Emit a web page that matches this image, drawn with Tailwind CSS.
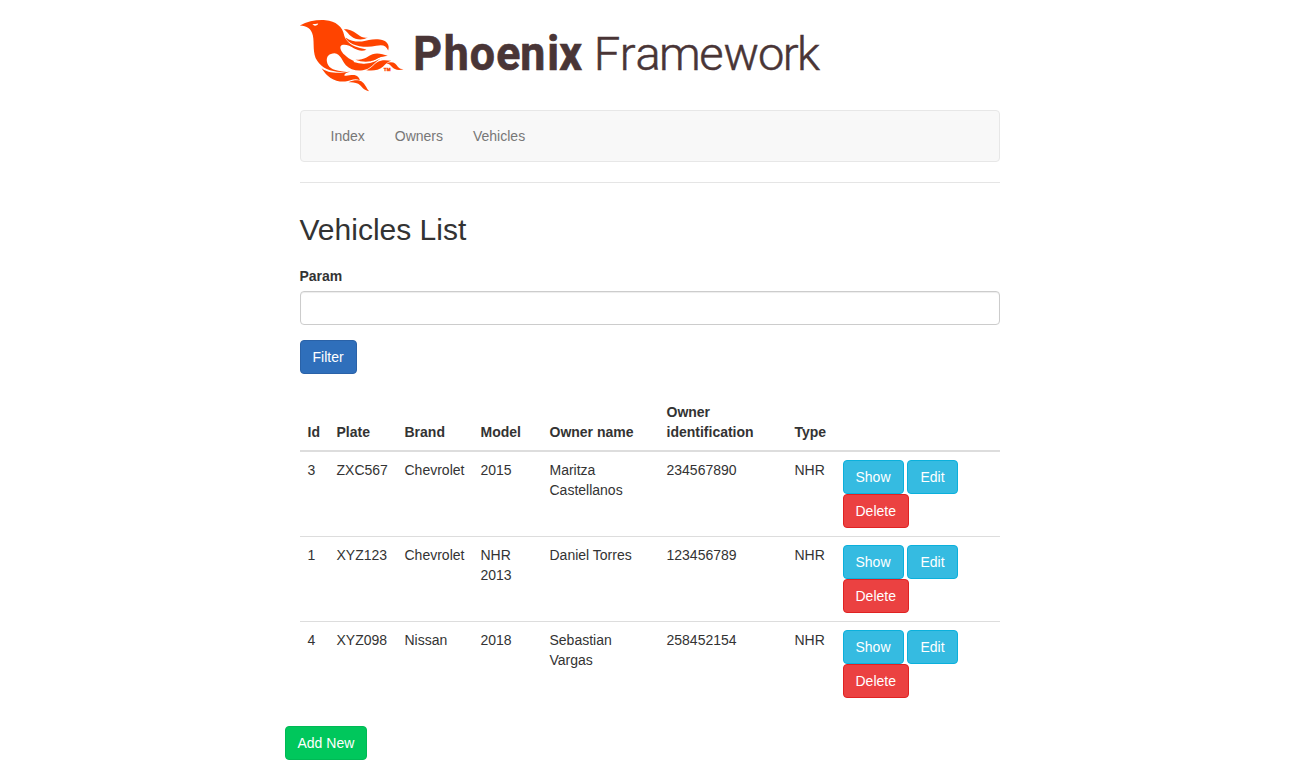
<!DOCTYPE html>
<html lang="en">
<head>
<meta charset="utf-8">
<title>Vehicles List</title>
<script src="https://cdn.jsdelivr.net/npm/@tailwindcss/browser@4"></script>
</head>
<body class="bg-white font-['Liberation_Sans',Arial,sans-serif] text-sm leading-5 text-[#333]">
<div class="mx-auto w-[730px] pt-5">
  <div class="px-[15px]">
    <header class="h-[71px]">
      <svg class="block overflow-visible" width="520" height="71" viewBox="299.5 20 520 71" aria-label="Phoenix Framework">
        <g transform="translate(294.7 10.2) scale(.33333)" fill="#ff4400">
          <path d="M14 46C37 33 66 28 91 30C121 32 143 50 147 76C151 92 168 106 187 111C197 115 205 115 214 119C198 125 188 120 177 115C164 106 150 101 139 105C131 110 138 125 148 134C163 149 184 159 207 159C228 158 234 149 244 143C255 137 265 137 277 138C260 141 251 148 241 157C226 173 213 180 197 181C178 182 163 176 152 165C141 153 136 130 118 129C102 130 93 138 95 153C97 170 111 180 139 183L154 184C116 189 82 178 66 152C51 130 58 98 53 76C48 54 35 47 14 46Z"/>
          <path d="M146 57C164 56 177 64 189 74C198 81 207 84 218 82C201 91 182 89 168 78C160 72 155 64 146 57Z"/>
          <path d="M151 82C166 93 182 95 200 94C219 91 232 85 254 88C274 91 285 103 279 121C273 106 262 102 243 107C217 113 190 109 173 102C162 97 154 91 151 82Z"/>
          <path fill="none" stroke="#fff" stroke-width="5" d="M176 153C207 163 225 156 239 151C250 144 262 140 279 140"/>
          <path d="M181 149C211 149 218 137 232 132C248 127 262 132 278 137C260 138 251 142 240 149C222 157 199 156 181 149Z"/>
          <path d="M213 180C229 174 234 164 246 156C260 147 276 150 288 152C277 155 270 163 263 170C250 181 231 183 213 180Z"/>
          <path d="M273 159C294 152 301 160 308 170C313 176 318 177 325 177C311 182 297 179 289 169C284 163 280 160 273 159Z"/>
          <path d="M79 174C97 187 117 188 136 188C148 187 155 184 165 185C156 187 149 190 147 195C151 200 167 193 180 195C188 197 193 205 194 210C177 203 166 212 150 214C117 216 95 199 79 174Z"/>
          <path d="M160 216C178 208 193 208 202 216C212 224 214 236 222 243C205 242 200 228 189 221C180 216 170 217 160 216Z"/>
          <path fill="#fff" d="M51 43C57 40 63 42 69 40C68 46 58 49 54 44Z"/>
          <text x="266" y="182" class="font-['Liberation_Sans',sans-serif] text-[12px] font-bold" stroke="#ff4400" textLength="20" lengthAdjust="spacingAndGlyphs">TM</text>
        </g>
        <g fill="#493536" stroke="#493536">
          <text transform="translate(412.8 70) scale(.94 1)" x="0 32.4 60.1 88.3 113.9 142.4 155.4" y="0" class="font-['Roboto',sans-serif] text-[47.5px] font-bold" stroke-width=".7">Phoenix</text>
          <text x="593.3 619.2 635 658.6 698.7 723 757.5 782.2 796.5" y="70" class="font-['Roboto',sans-serif] text-[47px] font-light" stroke-width=".5">Framework</text>
        </g>
      </svg>
    </header>
    <nav class="mt-[19px] flex h-[52px] items-center rounded border border-[#e7e7e7] bg-[#f8f8f8] px-[15px] text-[#777]">
      <a class="px-[15px]">Index</a>
      <a class="px-[15px]">Owners</a>
      <a class="px-[15px]">Vehicles</a>
    </nav>
    <hr class="mt-5 border-t border-[#e5e5e5]">
    <h2 class="mt-[30px] text-[30px] leading-[33px]">Vehicles List</h2>
    <form class="mt-5">
      <label for="param" class="block font-bold">Param</label>
      <input id="param" class="mt-[5px] block h-[34px] w-full rounded border border-[#ccc] bg-white px-3 shadow-[inset_0_1px_1px_rgba(0,0,0,0.075)]">
      <button type="button" class="mt-[15px] block h-[34px] rounded border border-[#2a62a8] bg-[#2f6fbb] px-3 text-white">Filter</button>
    </form>
    <table class="mt-5 w-[700px] table-fixed border-separate border-spacing-0 text-left">
      <colgroup><col class="w-[29px]"><col class="w-[68px]"><col class="w-[76px]"><col class="w-[69px]"><col class="w-[117px]"><col class="w-[128px]"><col class="w-[48px]"><col class="w-[165px]"></colgroup>
      <thead>
        <tr class="align-bottom [&>th]:border-b-2 [&>th]:border-[#ddd] [&>th]:p-2">
          <th>Id</th><th>Plate</th><th>Brand</th><th>Model</th><th>Owner name</th><th>Owner identification</th><th>Type</th><th></th>
        </tr>
      </thead>
      <tbody class="align-top [&_td]:border-[#ddd] [&_td]:p-2 [&_tr+tr>td]:border-t [&_a]:inline-block [&_a]:h-[34px] [&_a]:rounded [&_a]:border [&_a]:px-3 [&_a]:py-[6px] [&_a]:align-middle [&_a]:text-white">
        <tr>
          <td>3</td><td>ZXC567</td><td>Chevrolet</td><td>2015</td><td>Maritza Castellanos</td><td>234567890</td><td>NHR</td>
          <td><a class="border-[#0bb0dc] bg-[#35bbe1]">Show</a> <a class="border-[#0bb0dc] bg-[#35bbe1]">Edit</a><br><a class="border-[#e02222] bg-[#eb4141]">Delete</a></td>
        </tr>
        <tr>
          <td>1</td><td>XYZ123</td><td>Chevrolet</td><td>NHR 2013</td><td>Daniel Torres</td><td>123456789</td><td>NHR</td>
          <td><a class="border-[#0bb0dc] bg-[#35bbe1]">Show</a> <a class="border-[#0bb0dc] bg-[#35bbe1]">Edit</a><br><a class="border-[#e02222] bg-[#eb4141]">Delete</a></td>
        </tr>
        <tr>
          <td>4</td><td>XYZ098</td><td>Nissan</td><td>2018</td><td>Sebastian Vargas</td><td>258452154</td><td>NHR</td>
          <td><a class="border-[#0bb0dc] bg-[#35bbe1]">Show</a> <a class="border-[#0bb0dc] bg-[#35bbe1]">Edit</a><br><a class="border-[#e02222] bg-[#eb4141]">Delete</a></td>
        </tr>
      </tbody>
    </table>
  </div>
  <button type="button" class="mt-5 block h-[34px] rounded border border-[#00b955] bg-[#00c75c] px-3 text-white">Add New</button>
</div>
</body>
</html>
